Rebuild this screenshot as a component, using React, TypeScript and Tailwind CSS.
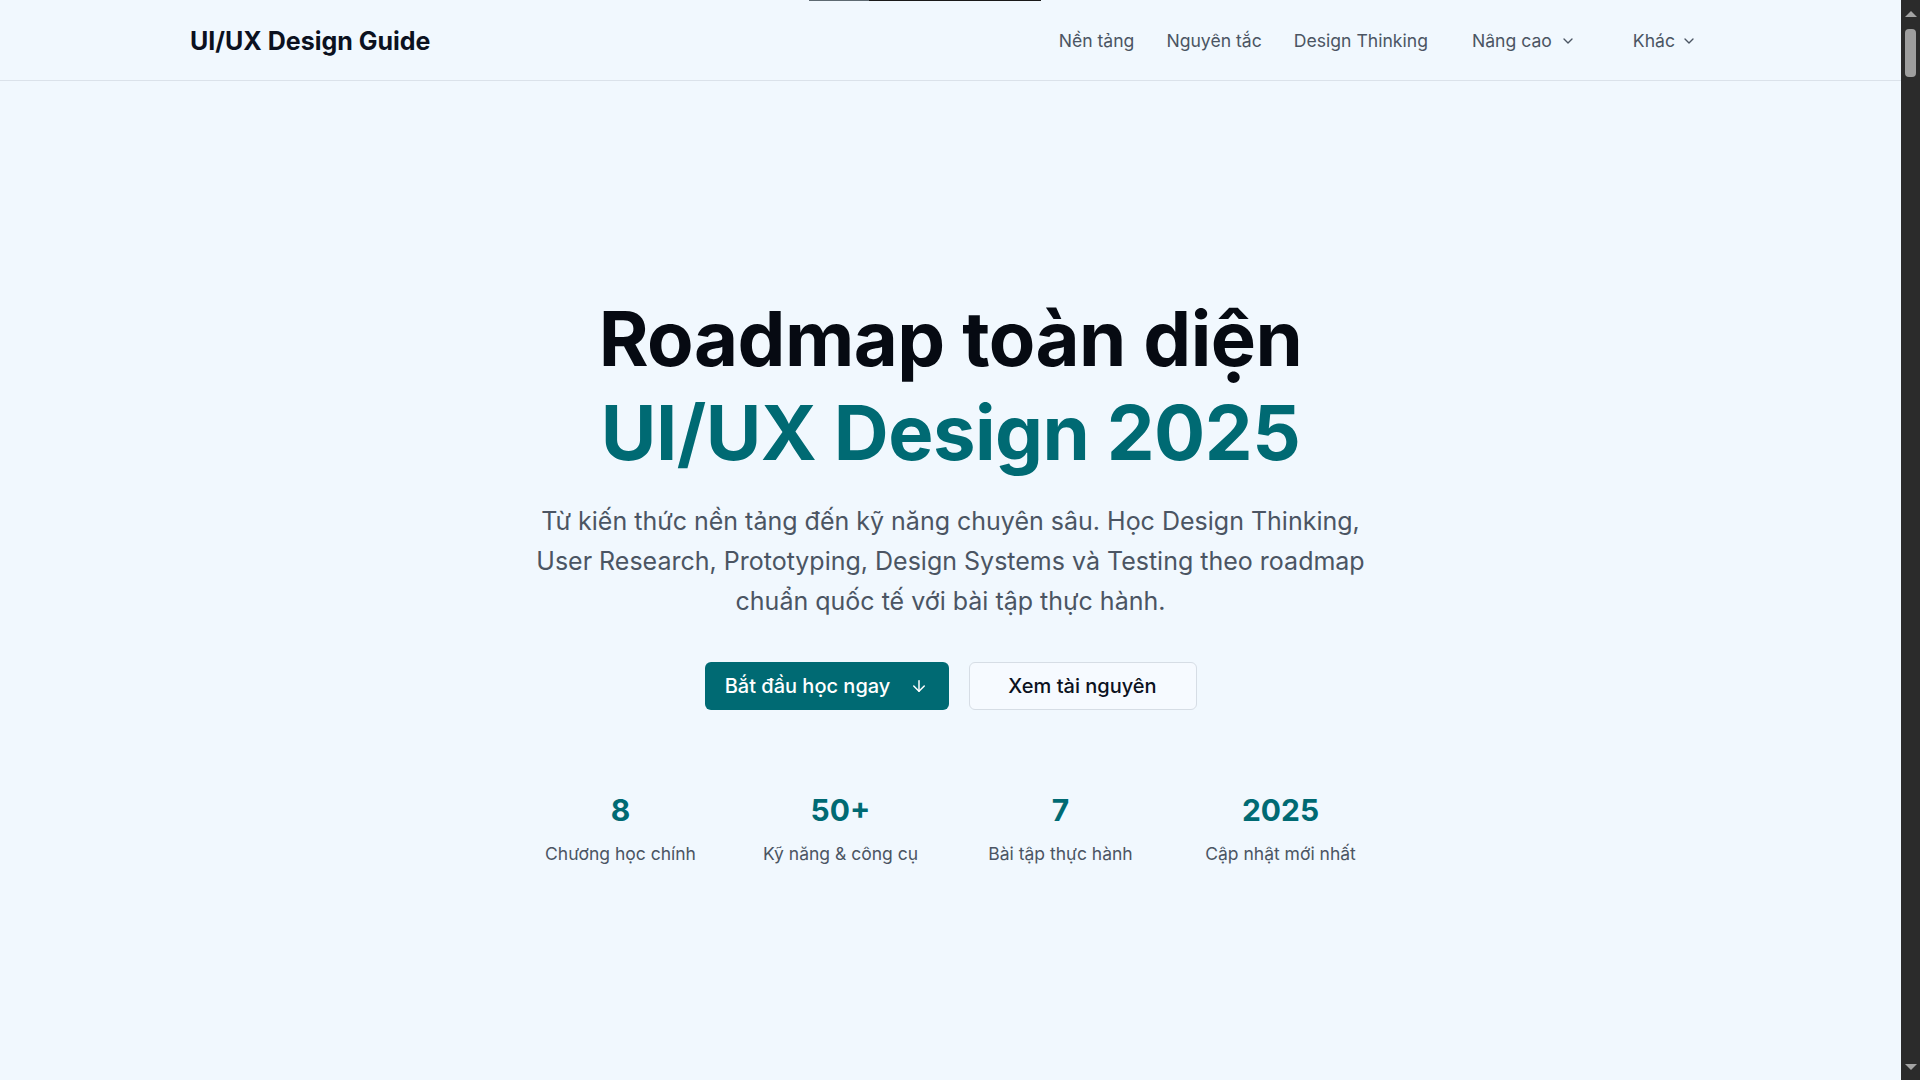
import React from "react";
import { ChevronDown, ArrowDown } from "lucide-react";

function NavLink({ children }: { children: React.ReactNode }) {
  return (
    <a href="#" className="text-[17.6px] text-[#4b5563] hover:text-[#111827]">
      {children}
    </a>
  );
}

export default function App() {
  const stats = [
    { value: "8", label: "Chương học chính" },
    { value: "50+", label: "Kỹ năng & công cụ" },
    { value: "7", label: "Bài tập thực hành" },
    { value: "2025", label: "Cập nhật mới nhất" },
  ];
  return (
    <div className="flex h-screen w-full overflow-hidden bg-[#f1f8fe] font-['Inter','Noto_Sans',sans-serif]">
      <div className="relative flex min-w-0 flex-1 flex-col">
        {/* top progress line */}
        <div className="absolute left-[809px] top-0 flex h-px">
          <div className="h-px w-[60px] bg-[#5e6a72]" />
          <div className="h-px w-[172px] bg-[#1a1a1a]" />
        </div>

        <header className="border-b border-[#dbe2ea]">
          <div className="mx-auto flex h-20 w-[1521px] items-center justify-between pt-[3px]">
            <a href="#" className="text-[25px] font-bold text-[#0b1120]">
              UI/UX Design Guide
            </a>
            <nav className="flex items-center">
              <div className="flex items-center gap-8">
                <NavLink>Nền tảng</NavLink>
                <NavLink>Nguyên tắc</NavLink>
                <NavLink>Design Thinking</NavLink>
              </div>
              <button className="ml-8 flex items-center px-3 text-[17.6px] text-[#4b5563]">
                Nâng cao
                <ChevronDown size={16} strokeWidth={2} className="ml-2" />
              </button>
              <button className="ml-[33px] flex items-center pl-3 pr-[14px] text-[17.6px] text-[#4b5563]">
                Khác
                <ChevronDown size={16} strokeWidth={2} className="ml-1.5" />
              </button>
            </nav>
          </div>
        </header>

        <main className="flex flex-col items-center pt-[210px] text-center">
          <h1 className="text-[76px] font-bold leading-[94px] tracking-[-0.007em] text-[#060a12]">
            Roadmap toàn diện
            <span className="block text-[#006a73]">UI/UX Design 2025</span>
          </h1>
          <p className="mt-[22px] max-w-[845px] text-[25px] leading-[40px] text-[#4b5563]">
            Từ kiến thức nền tảng đến kỹ năng chuyên sâu. Học Design Thinking,
            User Research, Prototyping, Design Systems và Testing theo roadmap
            chuẩn quốc tế với bài tập thực hành.
          </p>
          <div className="mt-[41px] flex items-center gap-5">
            <button className="flex h-12 w-[244px] items-center justify-center gap-5 rounded-md bg-[#006a73] text-xl font-medium text-white">
              Bắt đầu học ngay
              <ArrowDown size={18} strokeWidth={2} />
            </button>
            <button className="flex h-12 w-[228px] items-center justify-center rounded-md border border-[#d6dde5] bg-[#f6faff] text-xl font-medium text-[#0b1120]">
              Xem tài nguyên
            </button>
          </div>
          <div className="mt-[82px] grid w-[880px] grid-cols-4">
            {stats.map((s) => (
              <div key={s.label} className="flex flex-col items-center">
                <div className="text-3xl font-bold text-[#006a73]">{s.value}</div>
                <div className="mt-[13px] text-[17.5px] text-[#4b5563]">{s.label}</div>
              </div>
            ))}
          </div>
        </main>
      </div>

      {/* scrollbar */}
      <div className="relative flex h-full w-[19px] shrink-0 flex-col items-center bg-[#2b2b2b]">
        <div className="mt-[11px] h-0 w-0 border-x-[6px] border-b-[6px] border-x-transparent border-b-[#a3a3a3]" />
        <div className="mt-[12px] h-[48px] w-[11px] rounded-[4px] bg-[#9e9e9e]" />
        <div className="flex-1" />
        <div className="mb-[10px] h-0 w-0 border-x-[6px] border-t-[6px] border-x-transparent border-t-[#a3a3a3]" />
      </div>
    </div>
  );
}
